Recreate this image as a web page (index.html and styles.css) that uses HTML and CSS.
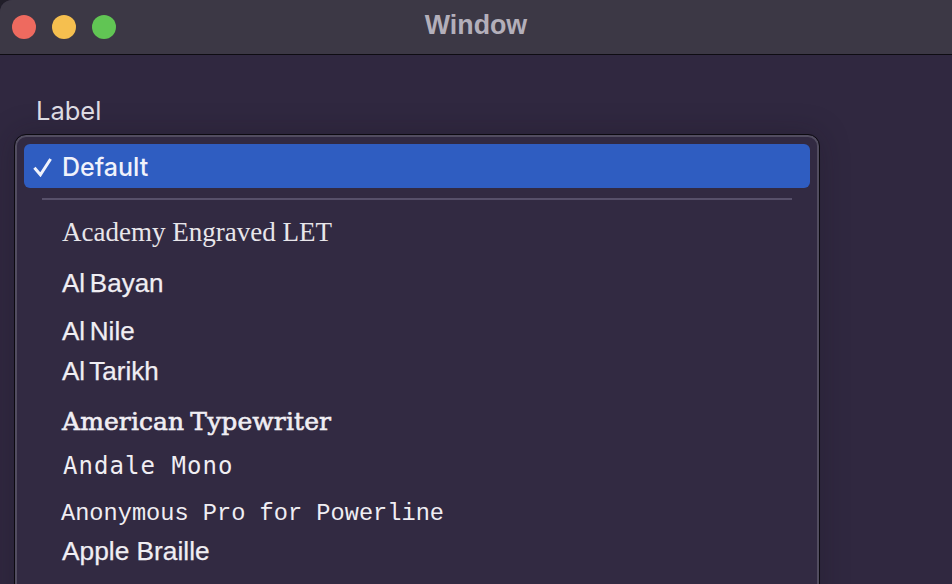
FILE: index.html
```html
<!DOCTYPE html>
<html lang="en">
<head>
<meta charset="utf-8">
<title>Window</title>
<link rel="stylesheet" href="styles.css">
</head>
<body>
<div class="window">
  <header class="titlebar">
    <div class="lights">
      <span class="light red"></span>
      <span class="light yellow"></span>
      <span class="light green"></span>
    </div>
    <div class="title">Window</div>
  </header>
  <main class="content">
    <div class="label">Label</div>
    <div class="menu">
      <div class="selected">
        <svg class="check" width="19" height="20" viewBox="0 0 19 20"><path d="M1.4 10.8 L7.4 17.8 L17.6 2" fill="none" stroke="#f0f2fb" stroke-width="3"/></svg>
        <span>Default</span>
      </div>
      <div class="separator"></div>
      <div class="item academy">Academy Engraved LET</div>
      <div class="item bayan">Al Bayan</div>
      <div class="item nile">Al Nile</div>
      <div class="item tarikh">Al Tarikh</div>
      <div class="item typewriter">American Typewriter</div>
      <div class="item andale">Andale Mono</div>
      <div class="item anonymous">Anonymous Pro for Powerline</div>
      <div class="item braille">Apple Braille</div>
    </div>
  </main>
</div>
</body>
</html>
```
FILE: styles.css
```css
html, body {
  margin: 0;
  padding: 0;
  width: 952px;
  height: 584px;
  overflow: hidden;
  background: #211e29;
}
.window {
  width: 952px;
  height: 584px;
  border-top-left-radius: 12px;
  overflow: hidden;
  background: #302840;
  display: flex;
  flex-direction: column;
  font-family: "Inter", "Liberation Sans", sans-serif;
}
.titlebar {
  height: 54px;
  flex: none;
  box-sizing: content-box;
  border-bottom: 1px solid #0e0c12;
  background: #3c3845;
  display: grid;
  grid-template-columns: 1fr auto 1fr;
  align-items: center;
}
.lights {
  display: flex;
  gap: 16px;
  padding-left: 12px;
  grid-column: 1;
}
.light {
  width: 24px;
  height: 24px;
  border-radius: 50%;
}
.red { background: #ee6a5f; }
.yellow { background: #f5bf4f; }
.green { background: #61c554; }
.title {
  grid-column: 2;
  color: #b3afba;
  font: 700 26.8px/1 "Liberation Sans", sans-serif;
  padding-bottom: 3px;
}
.content {
  flex: 1;
  min-height: 0;
  padding: 41px 0 0 14px;
  background: #302840;
}
.label {
  font-size: 25.5px;
  line-height: 30px;
  height: 30px;
  margin-left: 22px;
  margin-bottom: 8px;
  color: #dddbe2;
}
.menu {
  width: 786px;
  height: 460px;
  padding: 9px;
  border: 1px solid #0c0a10;
  border-radius: 12px 12px 0 0;
  box-shadow: inset 0 0 0 2px #524d60, 0 0 30px rgba(20, 18, 28, .28);
  background: #322a42;
}
.selected {
  height: 44px;
  box-sizing: border-box;
  padding-top: 1px;
  border-radius: 6px;
  background: #2f5dc1;
  color: #f0f2fb;
  display: flex;
  align-items: center;
  gap: 10px;
  padding-left: 9px;
  font-size: 25px;
  font-weight: 500;
}
.check { flex: none; }
.separator {
  height: 2px;
  margin: 10px 18px 0;
  background: #57506a;
}
.item {
  margin-left: 38px;
  color: #f0eef3;
  white-space: nowrap;
}
.academy {
  font: 27px/30px "Liberation Serif", serif;
  margin-top: 17px;
  color: #e8e6ea;
}
.bayan, .nile, .tarikh, .braille {
  font: 26px/30px "Liberation Sans", sans-serif;
  word-spacing: -2.5px;
  -webkit-text-stroke: .25px #f0eef3;
}
.bayan { margin-top: 21px; }
.nile { margin-top: 18px; }
.tarikh { margin-top: 10px; }
.typewriter {
  font: 25px/30px "DejaVu Serif", serif;
  -webkit-text-stroke: .6px #f0eef3;
  margin-top: 21px;
  word-spacing: -2px;
  letter-spacing: .1px;
}
.andale {
  font: 24px/30px "DejaVu Sans Mono", monospace;
  letter-spacing: 1.05px;
  margin-top: 14px;
  margin-left: 39px;
}
.anonymous {
  font: 23.65px/30px "Liberation Mono", monospace;
  margin-top: 18px;
  margin-left: 37px;
}
.braille {
  font-size: 26.3px;
  word-spacing: 0;
  margin-top: 7px;
}
```
